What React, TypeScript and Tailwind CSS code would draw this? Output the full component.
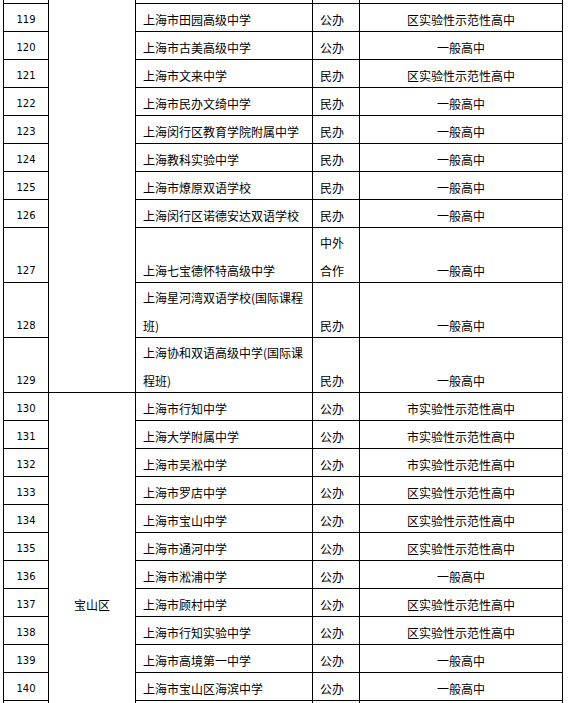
type School = {
  no: number;
  name: React.ReactNode;
  kind: React.ReactNode;
  level: string;
  tall?: boolean;
};

const minhang: School[] = [
  { no: 119, name: '上海市田园高级中学', kind: '公办', level: '区实验性示范性高中' },
  { no: 120, name: '上海市古美高级中学', kind: '公办', level: '一般高中' },
  { no: 121, name: '上海市文来中学', kind: '民办', level: '区实验性示范性高中' },
  { no: 122, name: '上海市民办文绮中学', kind: '民办', level: '一般高中' },
  { no: 123, name: '上海闵行区教育学院附属中学', kind: '民办', level: '一般高中' },
  { no: 124, name: '上海教科实验中学', kind: '民办', level: '一般高中' },
  { no: 125, name: '上海市燎原双语学校', kind: '民办', level: '一般高中' },
  { no: 126, name: '上海闵行区诺德安达双语学校', kind: '民办', level: '一般高中' },
  {
    no: 127,
    name: '上海七宝德怀特高级中学',
    kind: (
      <>
        中外
        <br />
        合作
      </>
    ),
    level: '一般高中',
    tall: true
  },
  {
    no: 128,
    name: (
      <>
        上海星河湾双语学校(国际课程
        <br />
        班)
      </>
    ),
    kind: '民办',
    level: '一般高中',
    tall: true
  },
  {
    no: 129,
    name: (
      <>
        上海协和双语高级中学(国际课
        <br />
        程班)
      </>
    ),
    kind: '民办',
    level: '一般高中',
    tall: true
  }
];

const baoshan: School[] = [
  { no: 130, name: '上海市行知中学', kind: '公办', level: '市实验性示范性高中' },
  { no: 131, name: '上海大学附属中学', kind: '公办', level: '市实验性示范性高中' },
  { no: 132, name: '上海市吴淞中学', kind: '公办', level: '市实验性示范性高中' },
  { no: 133, name: '上海市罗店中学', kind: '公办', level: '区实验性示范性高中' },
  { no: 134, name: '上海市宝山中学', kind: '公办', level: '区实验性示范性高中' },
  { no: 135, name: '上海市通河中学', kind: '公办', level: '区实验性示范性高中' },
  { no: 136, name: '上海市淞浦中学', kind: '公办', level: '一般高中' },
  { no: 137, name: '上海市顾村中学', kind: '公办', level: '区实验性示范性高中' },
  { no: 138, name: '上海市行知实验中学', kind: '公办', level: '区实验性示范性高中' },
  { no: 139, name: '上海市高境第一中学', kind: '公办', level: '一般高中' },
  { no: 140, name: '上海市宝山区海滨中学', kind: '公办', level: '一般高中' }
];

const cell = 'border border-black p-0 align-bottom';
const line = 'leading-[28px] -mb-[3px]';

function Cells({ school }: { school: School }) {
  return (
    <>
      <td className={`${cell} text-center`}>
        <div className={`${line} font-['DejaVu_Sans',sans-serif] text-[10px]`}>{school.no}</div>
      </td>
      <td className={`${cell} pl-[7px]`}>
        <div className={line}>{school.name}</div>
      </td>
      <td className={`${cell} pl-[7px]`}>
        <div className={line}>{school.kind}</div>
      </td>
      <td className={`${cell} text-center`}>
        <div className={line}>{school.level}</div>
      </td>
    </>
  );
}

export default function App() {
  return (
    <div className="h-[703px] w-[571px] overflow-hidden bg-white">
      <table className="-mt-[25px] ml-[3px] w-[560px] table-fixed border-collapse font-['Noto_Sans_CJK_SC',sans-serif] text-[12px] text-black">
        <colgroup>
          <col className="w-[45px]" />
          <col className="w-[87px]" />
          <col className="w-[177px]" />
          <col className="w-[47px]" />
          <col className="w-[203px]" />
        </colgroup>
        <tbody>
          <tr className="h-[28px]">
            <td className={cell} />
            <td className={cell} rowSpan={minhang.length + 1} />
            <td className={cell} />
            <td className={cell} />
            <td className={cell} />
          </tr>
          {minhang.map((school) => (
            <tr key={school.no} className={school.tall ? 'h-[55px]' : 'h-[28px]'}>
              <Cells school={school} />
            </tr>
          ))}
          {baoshan.map((school, i) => (
            <tr key={school.no} className="h-[28px]">
              {i === 0 ? (
                <>
                  <td className={`${cell} text-center`}>
                    <div className={`${line} font-['DejaVu_Sans',sans-serif] text-[10px]`}>{school.no}</div>
                  </td>
                  <td className="border border-black p-0 pt-[4px] text-center align-middle" rowSpan={15}>
                    <div className="leading-[28px]">宝山区</div>
                  </td>
                  <td className={`${cell} pl-[7px]`}>
                    <div className={line}>{school.name}</div>
                  </td>
                  <td className={`${cell} pl-[7px]`}>
                    <div className={line}>{school.kind}</div>
                  </td>
                  <td className={`${cell} text-center`}>
                    <div className={line}>{school.level}</div>
                  </td>
                </>
              ) : (
                <Cells school={school} />
              )}
            </tr>
          ))}
          {[141, 142, 143, 144].map((n) => (
            <tr key={n} className="h-[28px]">
              <td className={cell} />
              <td className={cell} />
              <td className={cell} />
              <td className={cell} />
            </tr>
          ))}
        </tbody>
      </table>
    </div>
  );
}
